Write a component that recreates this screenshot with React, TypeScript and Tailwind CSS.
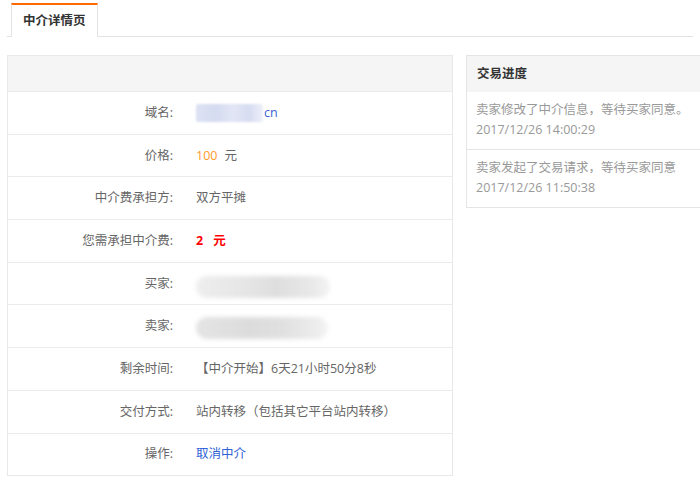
import { FC, ReactNode } from "react";

type Row = { label: string; value: ReactNode };

const rows: Row[] = [
  {
    label: "域名:",
    value: (
      <span className="flex items-center">
        <span className="inline-block h-[18px] w-[67px] rounded-[2px] bg-[linear-gradient(90deg,#dde2f4,#d5dbf0_30%,#e2e6f5_55%,#d7dcf1_80%,#eef0f9)] blur-[1px]" />
        <span className="ml-[1px] text-[#3a5fd0]">cn</span>
      </span>
    ),
  },
  {
    label: "价格:",
    value: (
      <span>
        <span className="text-[#ff9a2e]">100</span>
        <span className="ml-[7px]">元</span>
      </span>
    ),
  },
  { label: "中介费承担方:", value: "双方平摊" },
  {
    label: "您需承担中介费:",
    value: (
      <span className="font-bold text-[#ff0000]">
        2<span className="ml-[10px]">元</span>
      </span>
    ),
  },
  {
    label: "买家:",
    value: (
      <span className="mt-[6px] inline-block h-[22px] w-[134px] rounded-full bg-[linear-gradient(90deg,#eeeeee,#e6e6e6_35%,#dedede_60%,#e8e8e8_85%,#f3f3f3)] blur-[2px]" />
    ),
  },
  {
    label: "卖家:",
    value: (
      <span className="mt-[4px] inline-block h-[22px] w-[132px] rounded-full bg-[linear-gradient(90deg,#e4e4e4,#dcdcdc_40%,#e0e0e0_65%,#ececec_90%,#f4f4f4)] blur-[2px]" />
    ),
  },
  { label: "剩余时间:", value: "【中介开始】6天21小时50分8秒" },
  { label: "交付方式:", value: "站内转移（包括其它平台站内转移）" },
  {
    label: "操作:",
    value: <span className="cursor-pointer text-[#2f62d6]">取消中介</span>,
  },
];

const progress = [
  { text: "卖家修改了中介信息，等待买家同意。", time: "2017/12/26 14:00:29" },
  { text: "卖家发起了交易请求，等待买家同意", time: "2017/12/26 11:50:38" },
];

const App: FC = () => {
  return (
    <div
      className="h-[480px] w-[700px] overflow-hidden bg-white px-[7px] pt-[3px] text-[12.5px] text-[#666]"
      style={{ fontFamily: '"Open Sans", "Noto Sans CJK SC", sans-serif' }}
    >
      {/* tabs */}
      <div className="flex border-b border-[#e3e3e3]">
        <div className="-mb-px ml-[4px] flex h-[34px] items-center border-x border-t-2 border-x-[#e3e3e3] border-t-[#ff6a00] bg-white px-[11px] text-[12.5px] font-bold text-[#333]">
          中介详情页
        </div>
      </div>

      <div className="mt-[18px] flex items-start gap-[13px]">
        {/* detail table */}
        <div className="w-[446px] shrink-0 border border-[#e8e8e8]">
          <div className="h-[35px] bg-[#f5f5f5]" />
          {rows.map((row) => (
            <div
              key={row.label}
              className="flex h-[42.7px] items-center border-t border-[#ebebeb] leading-[20px]"
            >
              <div className="w-[165px] shrink-0 text-right">{row.label}</div>
              <div className="ml-[23px] flex items-center">{row.value}</div>
            </div>
          ))}
        </div>

        {/* progress */}
        <div className="w-[260px] shrink-0 border border-[#e5e5e5]">
          <div className="flex h-[36px] items-center bg-[#f5f5f5] pl-[10px] text-[12.5px] font-bold text-[#333]">
            交易进度
          </div>
          {progress.map((p, i) => (
            <div
              key={p.time}
              className={
                i === 0
                  ? "px-[9px] pt-[8px] pb-[9px] leading-[20px] text-[#999]"
                  : "border-t border-[#e5e5e5] px-[9px] pt-[8px] pb-[9px] leading-[20px] text-[#999]"
              }
            >
              <div>{p.text}</div>
              <div>{p.time}</div>
            </div>
          ))}
        </div>
      </div>
    </div>
  );
};

export default App;
